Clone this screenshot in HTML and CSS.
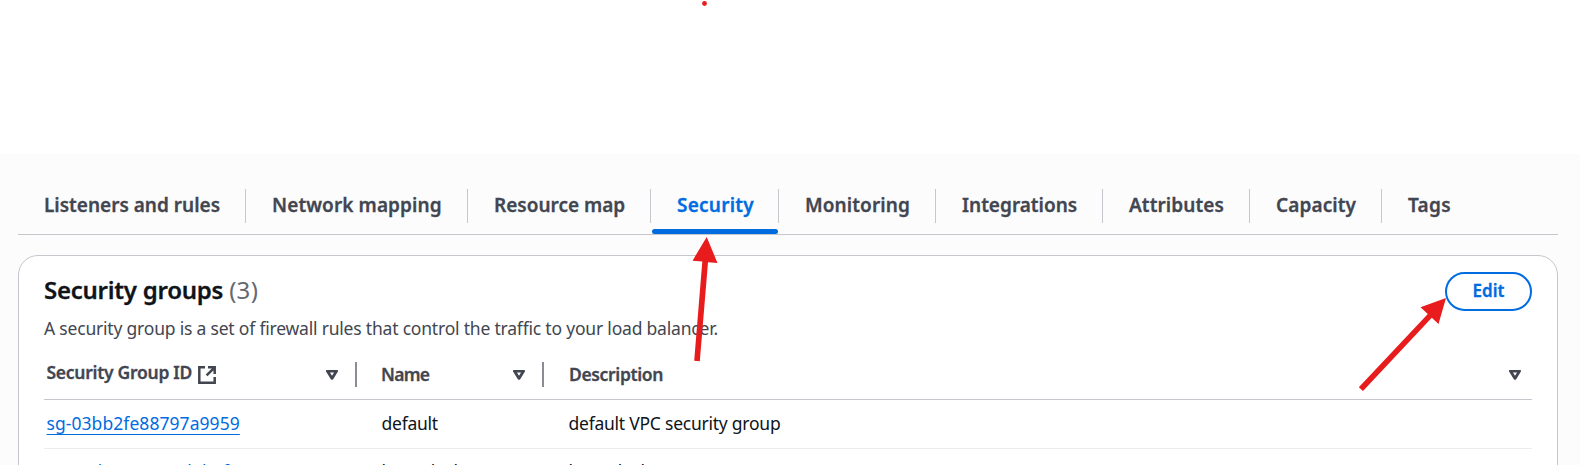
FILE: index.html
```html
<!DOCTYPE html>
<html lang="en">
<head>
<meta charset="utf-8">
<title>Load balancer security</title>
<link rel="stylesheet" href="styles.css">
</head>
<body>
<main class="page">
  <nav class="tabs">
    <a class="tab w-listeners"><span>Listeners and rules</span></a>
    <a class="tab w-network"><span>Network mapping</span></a>
    <a class="tab w-resource"><span>Resource map</span></a>
    <a class="tab w-security active"><span>Security</span></a>
    <a class="tab w-monitoring"><span>Monitoring</span></a>
    <a class="tab w-integrations"><span>Integrations</span></a>
    <a class="tab w-attributes"><span>Attributes</span></a>
    <a class="tab w-capacity"><span>Capacity</span></a>
    <a class="tab w-tags"><span>Tags</span></a>
  </nav>
  <section class="card">
    <header class="card-head">
      <h2 class="title">Security groups <span class="count">(3)</span></h2>
      <button class="edit">Edit</button>
    </header>
    <p class="desc">A security group is a set of firewall rules that control the traffic to your load balancer.</p>
    <div class="table">
      <div class="row head">
        <div class="th first"><span class="th-id">Security Group ID</span>
          <svg class="ext" viewBox="0 0 18 18"><path d="M7 1.3H1.3V16.7H16.7V11M10 1.3H16.7V8M16.2 1.8L8.6 9.4"/></svg>
          <svg class="caret" viewBox="0 0 12 10"><path d="M1.4 1.1H10.6L6 8.4Z"/></svg>
        </div>
        <div class="th"><span class="th-name">Name</span>
          <svg class="caret" viewBox="0 0 12 10"><path d="M1.4 1.1H10.6L6 8.4Z"/></svg>
        </div>
        <div class="th last"><span class="th-desc">Description</span>
          <svg class="caret" viewBox="0 0 12 10"><path d="M1.4 1.1H10.6L6 8.4Z"/></svg>
        </div>
      </div>
      <div class="row">
        <div class="td first"><a class="link">sg-03bb2fe88797a9959</a></div>
        <div class="td">default</div>
        <div class="td">default VPC security group</div>
      </div>
      <div class="row next">
        <div class="td first"><a class="link">sg-02d9e7a31c5d7b0f2</a></div>
        <div class="td">baconlock</div>
        <div class="td">baconlock</div>
      </div>
    </div>
  </section>
</main>
<svg class="marks" viewBox="0 0 1580 465">
  <circle cx="704.5" cy="3.5" r="2.4"/>
  <path d="M706.7 237L717.5 263L708 262.3L699.8 361.3L694.2 360.8L702.3 261.6L692.5 260.7Z"/>
  <path d="M1446 298L1438.5 324L1431.8 317.8L1363 391L1358.8 387.2L1427.8 314L1420.5 307.2Z"/>
</svg>
</body>
</html>
```
FILE: styles.css
```css
* { box-sizing: border-box; }
body {
  display: flow-root;
  margin: 0;
  height: 465px;
  overflow: hidden;
  background: #fff;
  color: #0f141a;
  font: 17.5px/22px "Noto Sans", "Open Sans", sans-serif;
}
.page {
  margin-top: 154px;
  height: 311px;
  padding: 35px 22px 0 18px;
  background: #fcfcfd;
  overflow: hidden;
}
.tabs {
  display: flex;
  height: 46px;
  border-bottom: 1px solid #c6c6cd;
}
.tab {
  position: relative;
  height: 34px;
  padding-left: 26px;
  border-right: 1px solid #c6c6cd;
  color: #424650;
  font-size: 19px;
  font-weight: 600;
  line-height: 33px;
  white-space: nowrap;
}
.tab, .title, .th, .edit { -webkit-text-stroke: 0.3px currentColor; }
.w-listeners { width: 228px; }
.w-network { width: 222px; letter-spacing: 0.1px; }
.w-resource { width: 183px; }
.w-security { width: 128px; letter-spacing: 0.25px; }
.w-monitoring { width: 157px; letter-spacing: 0.1px; }
.w-integrations { width: 167px; }
.w-attributes { width: 147px; letter-spacing: 0.1px; }
.w-capacity { width: 132px; letter-spacing: 0.1px; }
.w-tags { border-right: 0; letter-spacing: 0.3px; }
.active { color: #006ce0; }
.active::after {
  content: "";
  position: absolute;
  left: 1px;
  right: 0;
  top: 40px;
  height: 5px;
  border-radius: 3px;
  background: #006ce0;
}
.card {
  margin-top: 20px;
  height: 240px;
  padding: 16px 25px 0;
  border: 1px solid #c6c6cd;
  border-radius: 20px;
  background: #fff;
}
.card-head {
  display: flex;
  justify-content: space-between;
  height: 39px;
}
.title {
  margin: 2px 0 0;
  font-size: 24px;
  font-weight: 600;
  line-height: 31px;
  letter-spacing: -0.25px;
}
.count { color: #656871; font-weight: 400; letter-spacing: 0.3px; -webkit-text-stroke: 0; }
.edit {
  width: 87px;
  height: 39px;
  padding: 0 0 2px;
  border: 2px solid #006ce0;
  border-radius: 20px;
  background: #fff;
  color: #006ce0;
  font: 600 17px/22px "Noto Sans", "Open Sans", sans-serif;
}
.desc {
  margin: 6px 0 0;
  color: #424650;
  letter-spacing: -0.2px;
  white-space: nowrap;
}
.row {
  display: grid;
  grid-template-columns: 313px 187px 988px;
  height: 49px;
  border-bottom: 1px solid #ebebf0;
}
.row.head {
  height: 61px;
  padding-top: 23px;
  border-bottom-color: #c6c6cd;
}
.th {
  display: flex;
  height: 25px;
  padding: 0 17px 0 24px;
  border-right: 2px solid #8c8c94;
  color: #424650;
  font-weight: 600;
  line-height: 25px;
}
.th.first { padding-left: 2.5px; }
.th.last { padding: 0 11px 0 25px; border-right: 0; }
.th-id { margin-top: -2px; letter-spacing: -0.28px; }
.th-name { letter-spacing: -0.7px; }
.th-desc { letter-spacing: -0.35px; }
.ext { width: 18px; height: 18px; margin: 4px 0 0 6px; }
.ext path, .caret path { fill: none; stroke: #424650; stroke-width: 2.5; }
.caret { width: 12px; height: 10px; margin: 8px 0 0 auto; }
.caret path { stroke-linejoin: round; stroke-width: 2.8; }
.td { padding-left: 24.5px; line-height: 47px; letter-spacing: -0.24px; }
.td.first { padding-left: 2.5px; }
.row.next .td { line-height: 45px; }
.link {
  color: #006ce0;
  letter-spacing: 0.06px;
  text-decoration: underline;
  text-decoration-thickness: 1px;
  text-underline-offset: 4px;
  text-decoration-skip-ink: none;
}
.marks {
  position: absolute;
  left: 0;
  top: 0;
  width: 1580px;
  height: 465px;
  fill: #e81c1c;
  pointer-events: none;
}
```
